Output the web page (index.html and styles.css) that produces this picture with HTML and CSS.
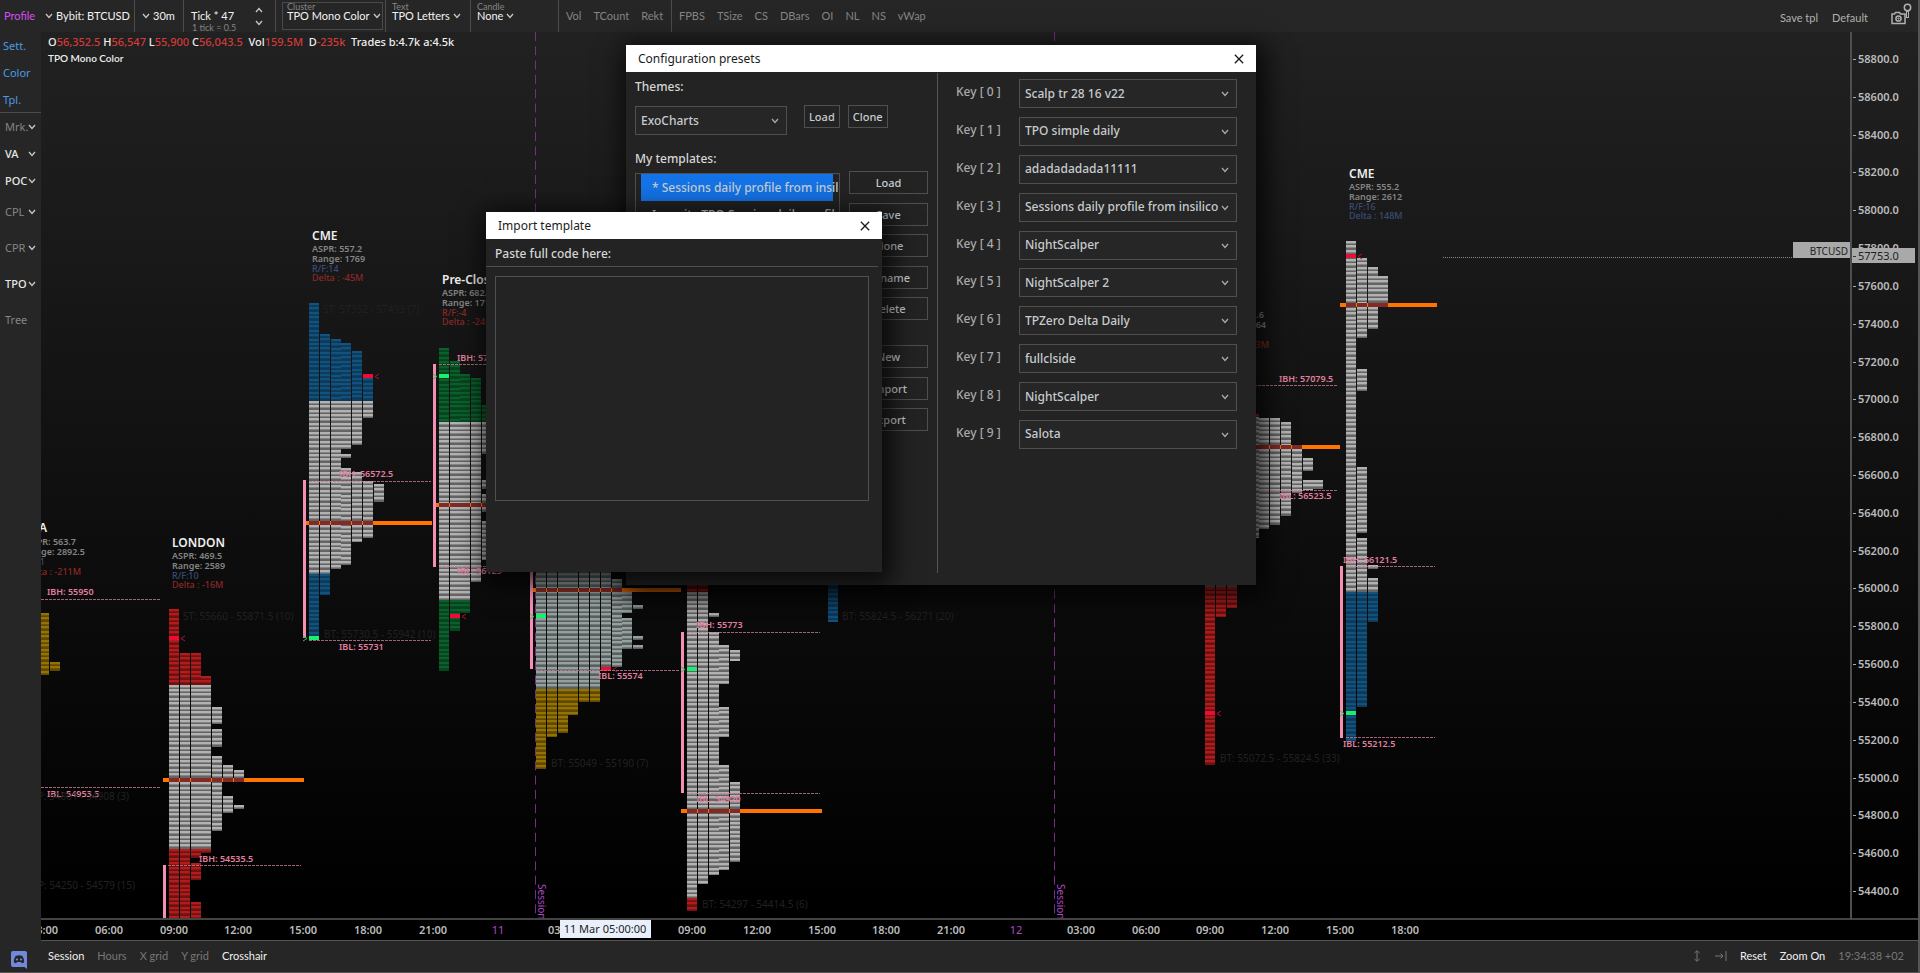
FILE: index.html
```html
<!DOCTYPE html>
<html lang="en">
<head>
<meta charset="utf-8">
<title>Profile - Bybit: BTCUSD</title>
<link rel="stylesheet" href="styles.css">
</head>
<body>
<svg class="defs" aria-hidden="true">
  <symbol id="down" viewBox="0 0 8 6"><path d="M1 1l3 3.4L7 1" fill="none" stroke="currentColor" stroke-width="1.3"/></symbol>
  <symbol id="up" viewBox="0 0 8 6"><path d="M1 5l3-3.4L7 5" fill="none" stroke="currentColor" stroke-width="1.3"/></symbol>
  <symbol id="close" viewBox="0 0 12 12"><path d="M1 1l10 10M11 1L1 11" fill="none" stroke="currentColor" stroke-width="1.6"/></symbol>
</svg>

<header class="toolbar">
  <div class="group source">
    <button class="mode">Profile</button>
    <button class="lit"><svg class="chev"><use href="#down"/></svg>Bybit: BTCUSD</button>
  </div>
  <div class="group frame"><button class="lit"><svg class="chev"><use href="#down"/></svg>30m</button></div>
  <div class="group tick">
    <div class="captioned"><span class="lit">Tick * 47</span><small class="under">1 tick = 0.5</small></div>
    <div class="stepper">
      <button aria-label="Increase tick"><svg class="chev"><use href="#up"/></svg></button>
      <button aria-label="Decrease tick"><svg class="chev"><use href="#down"/></svg></button>
    </div>
  </div>
  <div class="group cluster"><button class="captioned boxed lit"><small class="over">Cluster</small>TPO Mono Color<svg class="chev"><use href="#down"/></svg></button></div>
  <div class="group letters"><button class="captioned lit"><small class="over">Text</small>TPO Letters<svg class="chev"><use href="#down"/></svg></button></div>
  <div class="group candle"><button class="captioned lit"><small class="over">Candle</small>None<svg class="chev"><use href="#down"/></svg></button></div>
  <div class="group toggles first"><button>Vol</button><button>TCount</button><button>Rekt</button></div>
  <div class="group toggles last"><button>FPBS</button><button>TSize</button><button>CS</button><button>DBars</button><button>OI</button><button>NL</button><button>NS</button><button>vWap</button></div>
  <div class="saving">
    <button>Save tpl</button><button>Default</button>
    <button aria-label="Screenshot"><svg class="camera" viewBox="0 0 22 22" fill="none" stroke="currentColor">
      <path d="M1 11h2.500l1-1.500h4l1 1.500H14v9.500H1z" stroke-width="1.500"/><circle cx="7.500" cy="15.500" r="2.600" stroke-width="1.500"/><circle cx="7.500" cy="15.500" r=".7"/>
      <circle cx="16.500" cy="4.500" r="3.200" stroke-width="1.500"/><path d="M16.500 8v7" stroke-width="3"/><path d="M16.500 9v5" stroke="#262626"/>
    </svg></button>
  </div>
</header>

<nav class="sidebar">
  <div class="links"><a href="#sett">Sett.</a><a href="#color">Color</a><a href="#tpl">Tpl.</a></div>
  <div class="menu">
    <button>Mrk.<svg class="chev"><use href="#down"/></svg></button>
    <button class="on">VA<svg class="chev"><use href="#down"/></svg></button>
    <button class="on">POC<svg class="chev"><use href="#down"/></svg></button>
    <button class="tall">CPL<svg class="chev"><use href="#down"/></svg></button>
    <button class="tall">CPR<svg class="chev"><use href="#down"/></svg></button>
    <button class="tall on">TPO<svg class="chev"><use href="#down"/></svg></button>
    <button class="tall">Tree</button>
  </div>
</nav>

<main class="chart">
  <svg id="plot" class="plot" role="img" aria-label="TPO profile chart"></svg>
  <svg id="prices" class="prices" role="img" aria-label="Price axis"></svg>
  <svg id="times" class="times" role="img" aria-label="Time axis"></svg>
  <div class="legend">
    <p>O<i>56,352.5</i> H<i>56,547</i> L<i>55,900</i> C<i>56,043.5</i> &nbsp;Vol<i>159.5M</i> &nbsp;D<i>-235k</i> &nbsp;Trades b:4.7k a:4.5k</p>
    <p class="style">TPO Mono Color</p>
  </div>
</main>

<footer class="status">
  <a class="discord" href="#discord" aria-label="Discord"><svg viewBox="0 0 16 18"><path d="M2 0h12a2 2 0 0 1 2 2v16l-2.500-2H2a2 2 0 0 1-2-2V2a2 2 0 0 1 2-2z" fill="#7289da"/><path d="M4.500 5Q8 3.500 11.500 5 13.300 8 13.200 11.200q-1.200 1-2.400 1l-.8-1.200H6l-.8 1.200q-1.200 0-2.400-1Q2.700 8 4.500 5z" fill="#262626"/><circle cx="6" cy="8.500" r="1.100" fill="#7289da"/><circle cx="10" cy="8.500" r="1.100" fill="#7289da"/></svg></a>
  <div class="options"><button class="on">Session</button><button>Hours</button><button>X grid</button><button>Y grid</button><button class="on">Crosshair</button></div>
  <div class="options right">
    <button aria-label="Fit height"><svg class="fit" viewBox="0 0 6 12"><path d="M3 1v10M.5 3L3 .7 5.500 3M.5 9L3 11.300 5.500 9" fill="none" stroke="currentColor"/></svg></button>
    <button aria-label="Go to end"><svg class="end" viewBox="0 0 12 12"><path d="M0 6h8M5.500 3.500L8 6 5.500 8.500M11 1v10" fill="none" stroke="currentColor"/></svg></button>
    <button class="on">Reset</button><button class="on">Zoom On</button><span class="clock">19:34:38 +02</span>
  </div>
</footer>

<section class="dialog presets" aria-label="Configuration presets">
  <div class="title"><h2>Configuration presets</h2><button aria-label="Close"><svg><use href="#close"/></svg></button></div>
  <div class="panes">
    <div class="left">
      <label class="head" for="theme">Themes:</label>
      <div class="themes">
        <div class="pick"><select id="theme"><option>ExoCharts</option></select><svg class="chev"><use href="#down"/></svg></div>
        <button class="small">Load</button><button class="small">Clone</button>
      </div>
      <h3 class="head" id="mine">My templates:</h3>
      <div class="templates">
        <ul class="list" role="listbox" aria-labelledby="mine">
          <li role="option" aria-selected="true">* Sessions daily profile from insilico</li>
          <li role="option" aria-selected="false">Insanity TPO Session daily profile</li>
        </ul>
        <div class="actions">
          <div class="stack five"><button>Load</button><button>Save</button><button>Clone</button><button>Rename</button><button>Delete</button></div>
          <div class="stack three"><button>New</button><button>Import</button><button>Export</button></div>
        </div>
      </div>
    </div>
    <div class="keys">
      <div class="key"><label for="k0">Key [ 0 ]</label><div class="pick"><select id="k0"><option>Scalp tr 28 16 v22</option></select><svg class="chev"><use href="#down"/></svg></div></div>
      <div class="key"><label for="k1">Key [ 1 ]</label><div class="pick"><select id="k1"><option>TPO simple daily</option></select><svg class="chev"><use href="#down"/></svg></div></div>
      <div class="key"><label for="k2">Key [ 2 ]</label><div class="pick"><select id="k2"><option>adadadadada11111</option></select><svg class="chev"><use href="#down"/></svg></div></div>
      <div class="key"><label for="k3">Key [ 3 ]</label><div class="pick"><select id="k3"><option>Sessions daily profile from insilico light</option></select><svg class="chev"><use href="#down"/></svg></div></div>
      <div class="key"><label for="k4">Key [ 4 ]</label><div class="pick"><select id="k4"><option>NightScalper</option></select><svg class="chev"><use href="#down"/></svg></div></div>
      <div class="key"><label for="k5">Key [ 5 ]</label><div class="pick"><select id="k5"><option>NightScalper 2</option></select><svg class="chev"><use href="#down"/></svg></div></div>
      <div class="key"><label for="k6">Key [ 6 ]</label><div class="pick"><select id="k6"><option>TPZero Delta Daily</option></select><svg class="chev"><use href="#down"/></svg></div></div>
      <div class="key"><label for="k7">Key [ 7 ]</label><div class="pick"><select id="k7"><option>fullclside</option></select><svg class="chev"><use href="#down"/></svg></div></div>
      <div class="key"><label for="k8">Key [ 8 ]</label><div class="pick"><select id="k8"><option>NightScalper</option></select><svg class="chev"><use href="#down"/></svg></div></div>
      <div class="key"><label for="k9">Key [ 9 ]</label><div class="pick"><select id="k9"><option>Salota</option></select><svg class="chev"><use href="#down"/></svg></div></div>
    </div>
  </div>
</section>

<section class="dialog import" aria-label="Import template">
  <div class="title"><h2>Import template</h2><button aria-label="Close"><svg><use href="#close"/></svg></button></div>
  <label class="prompt" for="code">Paste full code here:</label>
  <textarea id="code"></textarea>
</section>
<script src="chart.js"></script>
</body>
</html>
```
FILE: styles.css
```css
* { box-sizing: border-box; }
body {
  margin: 0;
  height: 100vh;
  display: grid;
  grid-template: 32px 1fr 32px / 41px 1fr;
  position: relative;
  overflow: hidden;
  background: #262626;
  color: #858585;
  border-right: 2px solid #555;
  font: 11px/16px "Noto Sans", "Open Sans", sans-serif;
}
button, select, textarea { font: inherit; color: inherit; }
button { background: none; border: 0; padding: 0; white-space: nowrap; }
h2, h3, p, ul { margin: 0; padding: 0; font: inherit; }
.defs { display: none; }
.chev { width: 8px; height: 6px; flex: none; color: #c8c8c8; }

/* Toolbar */
.toolbar { grid-column: 1 / -1; display: flex; font-family: Lato, sans-serif; }
.group { display: flex; align-items: center; border-right: 1px solid #4c4c4c; flex: none; }
.group button { display: flex; align-items: center; gap: 3px; }
.lit { color: #f2f2f2; }
.source { width: 135px; padding-left: 4px; gap: 10px; }
.mode { color: #d94cf5; }
.frame { width: 49px; padding-left: 7px; }
.tick { width: 92px; padding: 0 12px 0 7px; justify-content: space-between; }
.stepper { display: grid; gap: 7px; }
.captioned { position: relative; height: 28px; line-height: 12px; display: flex; align-items: center; }
.captioned small { position: absolute; font-size: 9px; line-height: 9px; color: #858585; }
.over { top: 0; }
.boxed .over { top: -1px; }
.under { bottom: -2px; left: 1px; white-space: nowrap; }
.cluster { width: 110px; padding-left: 6px; }
.boxed { border: 1px solid #4a4a4a; padding: 0 5px 0 4px; width: 101px; }
.letters { width: 85px; padding-left: 6px; }
.candle { width: 88px; padding-left: 6px; }
.group.toggles { gap: 12px; padding-left: 7px; }
.first { width: 113px; }
.group.last { border: 0; }
.saving { margin-left: auto; display: flex; align-items: center; gap: 14px; padding: 4px 5px 0 0; color: #b0b0b0; }
.saving .camera { width: 22px; height: 22px; display: block; margin: -8px 0 0 9px; }

/* Sidebar */
.links { display: grid; height: 81px; border-bottom: 1px solid #4c4c4c; }
.links a { line-height: 27px; padding-left: 3px; color: #4a9be8; text-decoration: none; }
.menu { display: grid; }
.menu button { height: 27px; display: flex; align-items: center; justify-content: space-between; padding: 0 6px 0 5px; }
.menu .tall { height: 36px; }
.menu .on { color: #e6e6e6; font-weight: 500; }

/* Chart */
.chart {
  position: relative;
  display: grid;
  grid-template: 1fr 21px / 1fr 66px;
  background: linear-gradient(#212121, #000 96%);
  overflow: hidden;
}
.plot { width: 100%; height: 100%; border-right: 2px solid #4a5050; border-bottom: 2px solid #444; }
.prices { width: 100%; height: 100%; border-bottom: 2px solid #444; }
.times { grid-column: 1 / -1; width: 100%; height: 100%; border-bottom: 1px solid #555; }
.legend { position: absolute; top: 2px; left: 7px; color: #eee; font-weight: 500; }
.legend p { white-space: nowrap; }
.legend i { font-style: normal; color: #d23a3a; }
.legend .style { font: 600 10px/16px Lato, sans-serif; }
.axis { font: 600 11px "Noto Sans", sans-serif; fill: #bbb; }
.day { fill: #b048c8; font-weight: 400; }
.mark { font: 600 9px "Noto Sans", sans-serif; fill: #e07f9f; }
.name { font: 600 12px "Noto Sans", sans-serif; fill: #eee; }
.stat { font: 600 9px "Noto Sans", sans-serif; fill: #858585; }
.stat.blue { fill: #3a4c78; font-weight: 500; }
.stat.red { fill: #8c2828; font-weight: 500; }
.faint { font: 10px "Noto Sans", sans-serif; fill: #212121; }
.session { font: 10px "Noto Sans", sans-serif; fill: #b048c8; }

/* Status bar */
.status { grid-column: 1 / -1; display: flex; border-bottom: 1px solid #555; padding-bottom: 2px; font-family: Lato, sans-serif; }
.discord { width: 48px; padding: 10px 0 0 11px; }
.discord svg { width: 16px; height: 18px; display: block; }
.options { display: flex; align-items: center; gap: 13px; color: #777; }
.options .on { color: #f0f0f0; }
.options.right { margin-left: auto; padding-right: 14px; }
.fit { width: 6px; height: 12px; display: block; margin-right: 2px; }
.end { width: 12px; height: 12px; display: block; }

/* Dialogs */
.dialog { position: absolute; background: #232323; color: #c6ccd0; box-shadow: 4px 6px 24px 6px rgba(0, 0, 0, .75); font-size: 12px; font-weight: 500; }
.title { height: 27px; background: #fff; color: #1c1c1c; display: flex; align-items: center; justify-content: space-between; padding: 0 12px; font-weight: 400; }
.title svg { width: 10px; height: 10px; display: block; }
.presets { left: 626px; top: 45px; width: 630px; height: 540px; }
.panes { display: grid; grid-template-columns: 312px 1fr; height: 501px; }
.left { border-right: 1px solid #555; margin-top: 1px; padding: 6px 9px 0; }
.head { display: block; color: #d6d6d6; }
.themes { display: flex; align-items: flex-start; margin: 10px 0 16px; gap: 8px; }
.themes .pick { width: 152px; margin: 1px 9px 0 0; }
.pick { position: relative; min-width: 0; }
.pick select { appearance: none; width: 100%; height: 29px; background: #262626; border: 1px solid #4f4f4f; border-radius: 0; padding: 0 16px 0 5px; display: block; }
.pick .chev { position: absolute; right: 8px; top: 12px; color: #aaa; }
.small, .stack button { height: 23px; border: 1px solid #4f4f4f; font-size: 11px; line-height: 19px; }
.small { padding: 0 4px; }
.templates { display: flex; gap: 9px; margin-top: 4px; }
.list { list-style: none; flex: 1; margin-top: 2px; height: 300px; border: 1px solid #4f4f4f; padding: 0 6px 0 5px; overflow: hidden; min-width: 0; }
.list li { height: 27px; line-height: 27px; padding-left: 11px; white-space: nowrap; }
.list li[aria-selected="true"] { background: #1473e6; }
.actions { width: 79px; display: grid; gap: 25px; align-content: start; }
.stack { display: flex; flex-direction: column; justify-content: space-between; }
.five { height: 149px; }
.three { height: 86px; }
.keys { padding: 7px 19px 0 18px; height: 377px; display: flex; flex-direction: column; justify-content: space-between; }
.key { display: grid; grid-template-columns: 63px 1fr; }
.key label { padding-top: 5px; color: #a9a9a9; }
.import { left: 486px; top: 212px; width: 396px; height: 360px; }
.prompt { display: block; height: 28px; line-height: 29px; padding-left: 9px; margin-right: 4px; border-bottom: 1px solid #4f4f4f; color: #d6d6d6; }
.import textarea { display: block; margin: 9px 13px 0 9px; width: 374px; height: 225px; resize: none; background: #232323; border: 1px solid #4f4f4f; padding: 4px; }
```
FILE: chart.js
```js
const NS = 'http://www.w3.org/2000/svg';
const ROW = 4.444, PITCH = 10.8, CELL = 10;
const INK = {
  gray: ['#b2b2b2', '#646464'],
  mint: ['#979f9f', '#566060'],
  blue: ['#12527f', '#0d3a59'],
  green: ['#0b602b', '#08431f'],
  red: ['#b21c1c', '#6b1212'],
  gold: ['#967200', '#5f4800']
};

function add(parent, tag, attrs, text) {
  const el = document.createElementNS(NS, tag);
  for (const k in attrs) el.setAttribute(k, attrs[k]);
  if (text !== undefined) el.textContent = text;
  parent.appendChild(el);
  return el;
}
function layer(id, x, y) {
  return add(document.getElementById(id), 'g', { transform: `translate(${-x},${-y})` });
}
const plot = layer('plot', 41, 32);
const box = (x, y, w, h, fill, extra) =>
  add(plot, 'rect', { x, y, width: w, height: h, fill, 'shape-rendering': 'crispEdges', ...extra });

// Each profile: left edge, colour zones [ink, until y], columns of [top, bottom] runs.
const profiles = [
  { x: 38.7, zones: [['gold', 999]], cols: [[[613, 675]], [[662, 671]]] },
  { x: 169, zones: [['red', 684.5], ['gray', 849], ['red', 999]], poc: [780, 163, 304],
    cols: [[[609, 920]], [[653, 920]], [[653, 858], [863, 880], [902, 920]], [[676, 853]],
      [[707, 724], [729, 747], [756, 831]], [[765, 780], [796, 813]], [[770, 780], [805, 809]]],
    close: [0, 638], bar: [164, 865, 920] },
  { x: 309, zones: [['blue', 400.7], ['gray', 574], ['blue', 999]], poc: [522.7, 306, 432],
    cols: [[[303, 640]], [[334, 595]], [[339, 569]], [[343, 449], [454, 458], [468, 565]],
      [[351, 445], [472, 542]], [[374, 418], [481, 538]], [[484, 502]]],
    close: [5, 376], open: [0, 638], bar: [304.5, 480, 638] },
  { x: 438.7, zones: [['green', 422.3], ['gray', 599.7], ['green', 999]], poc: [505, 436, 500],
    cols: [[[348, 671]], [[361, 631]], [[374, 613]], [[378, 582]],
      [[405, 454], [480, 489], [494, 512], [521, 560]]],
    close: [1, 616], open: [0, 376], bar: [434, 364, 567] },
  { x: 536, zones: [['mint', 689.3], ['gold', 999]], poc: [590, 533, 681],
    cols: [[[560, 769]], [[560, 737]], [[560, 733]], [[560, 715]], [[560, 702]], [[560, 702]],
      [[560, 670]], [[579, 667]], [[592, 613], [618, 649]], [[605, 609], [636, 640], [645, 649]]],
    close: [6, 669], open: [0, 616], bar: [531.5, 560, 669] },
  { x: 687, zones: [['red', 592], ['gray', 898], ['red', 999]], poc: [811, 681, 822],
    cols: [[[580, 911]], [[580, 884]], [[613, 617], [632, 875]],
      [[645, 684], [707, 737], [765, 870]], [[650, 661], [782, 862]]],
    open: [0, 669], bar: [682.7, 632, 793] },
  { x: 827.5, zones: [['blue', 999]], cols: [[[580, 622]]] },
  { x: 1205.3, zones: [['red', 417], ['gray', 587], ['red', 999]], poc: [447.3, 1250, 1340],
    cols: [[[560, 765]], [[560, 617]], [[560, 608]], [], [[414, 538]], [[418, 529]], [[418, 525]],
      [[422, 516]], [[445, 493]], [[458, 471], [480, 490]], [[480, 489]]],
    close: [0, 713] },
  { x: 1346, zones: [['gray', 591.7], ['blue', 999]], poc: [305, 1340, 1437],
    cols: [[[241, 742]], [[258, 338], [369, 391], [467, 533], [538, 707]],
      [[267, 329], [565, 569], [578, 622]], [[276, 303]]],
    close: [0, 256], open: [0, 713], bar: [1341.5, 566, 738] }
];

// Session separators
for (const x of [535.5, 1054.5]) {
  add(plot, 'line', { x1: x, x2: x, y1: 32, y2: 919, stroke: '#74307f', 'stroke-dasharray': '9 5.3' });
  add(plot, 'text', { class: 'session', transform: `translate(${x + 2},884) rotate(90)` }, 'Session');
}

for (const p of profiles) {
  const left = i => Math.round(p.x + i * PITCH);
  if (p.poc) box(p.poc[1], p.poc[0] - 2, p.poc[2] - p.poc[1], 4, '#ff7300');
  p.cols.forEach((runs, i) => runs.forEach(([top, bottom]) => {
    let from = top;
    for (const [ink, until] of p.zones) {
      const to = Math.min(bottom, until);
      if (to > from) {
        box(left(i), from, CELL, to - from, INK[ink][1]);
        for (let y = from; y < to - 1; y += ROW) {
          box(left(i), Math.round(y), CELL, Math.min(3, to - y), INK[ink][0]);
          box(left(i), Math.round(y) + 2, CELL, 1, '#000', { opacity: .25 });
        }
        from = to;
      }
    }
    if (p.poc && top <= p.poc[0] && bottom >= p.poc[0] - 2) box(left(i), p.poc[0] - 2, CELL, 4, '#822a24');
  }));
  if (p.bar) box(p.bar[0] - 1.5, p.bar[1], 3, p.bar[2] - p.bar[1], '#f48fb1');
  if (p.close) {
    const [c, y] = p.close;
    box(left(c), y - 2, CELL, 4, '#f00a34');
    add(plot, 'path', { d: `M${left(c) + 16} ${y - 2}l-4 2.500 4 2.500`, fill: 'none', stroke: '#b01030' });
  }
  if (p.open) {
    const [c, y] = p.open;
    box(left(c), y - 2, CELL, 4, '#19f070');
    add(plot, 'path', { d: `M${left(c) - 6} ${y - 2}l4 2.500 -4 2.500`, fill: 'none', stroke: '#2fc060' });
  }
}

// Initial balance levels: line from, to, y; label x, baseline
[
  [41, 161, 599, 47, 595, 'IBH: 55950'], [41, 161, 787, 47, 797, 'IBL: 54953.5'],
  [168, 301, 865, 199, 862, 'IBH: 54535.5'],
  [309, 431, 481, 339, 477, 'IBH: 56572.5'], [309, 431, 640, 339, 650, 'IBL: 55731'],
  [439, 560, 364, 457, 361, 'IBH: 57182.5'], [439, 560, 566, 457, 574, 'IBL: 56123'],
  [536, 680, 670, 598, 679, 'IBL: 55574'],
  [687, 820, 632, 696, 628, 'IBH: 55773'], [687, 820, 793, 696, 802, 'IBL: 54920'],
  [1206, 1338, 385, 1279, 382, 'IBH: 57079.5'], [1206, 1338, 490, 1279, 499, 'IBL: 56523.5'],
  [1346, 1435, 566, 1343, 563, 'IBH: 56121.5'], [1346, 1435, 737, 1343, 747, 'IBL: 55212.5']
].forEach(([x1, x2, y, tx, ty, label]) => {
  add(plot, 'line', { x1, x2, y1: y + .5, y2: y + .5, stroke: '#c97a92', 'stroke-dasharray': '3 1', opacity: .8 });
  add(plot, 'text', { class: 'mark', x: tx, y: ty }, label);
});

// Session headings; the anchor is the right edge where the heading runs out of view
function heading(x, y, name, aspr, range, rf, delta, rfInk, deltaInk) {
  add(plot, 'text', { class: 'name', x, y }, name);
  add(plot, 'text', { class: 'stat', x, y: y + 12 }, 'ASPR: ' + aspr);
  add(plot, 'text', { class: 'stat', x, y: y + 22 }, 'Range: ' + range);
  add(plot, 'text', { class: 'stat ' + rfInk, x, y: y + 32 }, 'R/F:' + rf);
  add(plot, 'text', { class: 'stat ' + deltaInk, x, y: y + 41 }, 'Delta : ' + delta);
}
heading(172, 547, 'LONDON', '469.5', '2589', '10', '-16M', 'blue', 'red');
heading(312, 240, 'CME', '557.2', '1769', '14', '-45M', 'blue', 'red');
heading(442, 284, 'Pre-Close', '682.4', '1715', '-4', '-24M', 'red', 'red');
heading(1349, 178, 'CME', '555.2', '2612', '16', '148M', 'blue', 'blue');
[
  [47, 532, 'name', 'ASIA'], [76, 545, 'stat', 'ASPR: 563.7'], [85, 555, 'stat', 'Range: 2892.5'],
  [45, 565, 'stat blue', 'R/F:1'], [81, 575, 'stat red', 'Delta : -211M'],
  [1264, 318, 'stat', 'ASPR: 512.6'], [1266, 328, 'stat', 'Range: 2364'], [1269, 348, 'stat red', 'Delta : -13M'],
  [129, 800, 'faint', 'SP: 54861 - 54908 (3)'], [135, 889, 'faint', 'SP: 54250 - 54579 (15)']
].forEach(([x, y, cls, t]) => add(plot, 'text', { class: cls, x, y, 'text-anchor': 'end' }, t));
[
  [323, 313, 'ST: 57352 - 57493 (7)'], [183, 620, 'ST: 55660 - 55871.5 (10)'], [324, 638, 'BT: 55730.5 - 55942 (10)'],
  [551, 767, 'BT: 55049 - 55190 (7)'], [702, 908, 'BT: 54297 - 54414.5 (6)'],
  [842, 620, 'BT: 55824.5 - 56271 (20)'], [1220, 762, 'BT: 55072.5 - 55824.5 (33)']
].forEach(([x, y, t]) => add(plot, 'text', { class: 'faint', x, y }, t));

// Last price
add(plot, 'line', { x1: 1443, x2: 1794, y1: 257.5, y2: 257.5, stroke: '#8a8a8a', 'stroke-dasharray': '1 1' });
box(1793, 242, 57, 16, '#a9a9a9');
add(plot, 'text', { x: 1848, y: 255, 'font-size': 10, fill: '#222', 'text-anchor': 'end' }, 'BTCUSD');

// Price axis
const prices = layer('prices', 1852, 32);
for (let i = 0; i < 23; i++) {
  const y = 59 + i * 37.82;
  add(prices, 'line', { x1: 1853, x2: 1856, y1: Math.round(y) + .5, y2: Math.round(y) + .5, stroke: '#aaa' });
  add(prices, 'text', { class: 'axis', x: 1858, y: Math.round(y) + 4 }, (58800 - i * 200) + '.0');
}
add(prices, 'rect', { x: 1852, y: 248, width: 63, height: 15, fill: '#a9a9a9' });
add(prices, 'line', { x1: 1853, x2: 1856, y1: 256.5, y2: 256.5, stroke: '#333' });
add(prices, 'text', { x: 1858, y: 260, 'font-size': 11, fill: '#222' }, '57753.0');

// Time axis
const times = layer('times', 41, 920);
const hours = ['03:00', '06:00', '09:00', '12:00', '15:00', '18:00', '21:00'];
for (let i = 0; i < 22; i++) {
  const slot = (i + 1) % 8;
  const text = slot ? hours[slot - 1] : String(11 + (i > 8));
  add(times, 'text', { class: slot ? 'axis' : 'axis day', x: Math.round(44 + i * 64.8), y: 934, 'text-anchor': 'middle' }, text);
}
add(times, 'rect', { x: 560, y: 920, width: 91, height: 18, fill: '#eaf0fb' });
add(times, 'text', { x: 605, y: 933, 'font-size': 11, fill: '#222', 'text-anchor': 'middle' }, '11 Mar 05:00:00');
```
